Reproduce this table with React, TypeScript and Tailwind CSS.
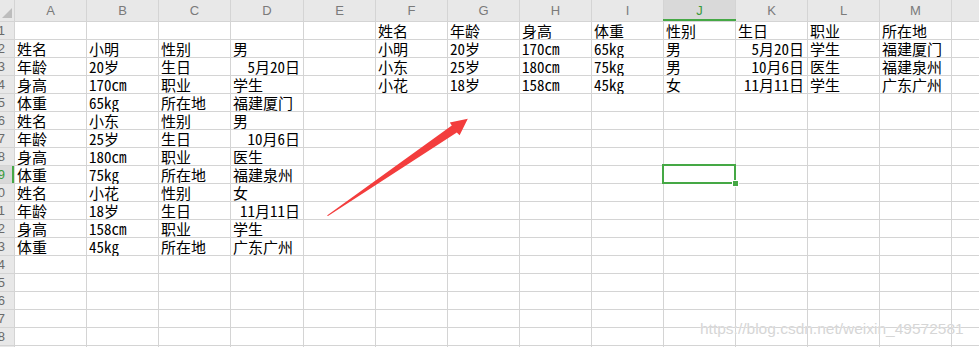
import React from "react";

const COLS = ["A", "B", "C", "D", "E", "F", "G", "H", "I", "J", "K", "L", "M", "N"];

type Cell = { t: string; r?: boolean };

const data: Record<string, Cell> = {};
const put = (col: string, row: number, t: string, r = false) => {
  data[`${col}${row}`] = { t, r };
};

const left: [string, string, string, string, boolean?][] = [
  ["姓名", "小明", "性别", "男"],
  ["年龄", "20岁", "生日", "5月20日", true],
  ["身高", "170cm", "职业", "学生"],
  ["体重", "65kg", "所在地", "福建厦门"],
  ["姓名", "小东", "性别", "男"],
  ["年龄", "25岁", "生日", "10月6日", true],
  ["身高", "180cm", "职业", "医生"],
  ["体重", "75kg", "所在地", "福建泉州"],
  ["姓名", "小花", "性别", "女"],
  ["年龄", "18岁", "生日", "11月11日", true],
  ["身高", "158cm", "职业", "学生"],
  ["体重", "45kg", "所在地", "广东广州"],
];
left.forEach((r, i) => {
  const row = i + 2;
  put("A", row, r[0]);
  put("B", row, r[1]);
  put("C", row, r[2]);
  put("D", row, r[3], !!r[4]);
});

const right: string[][] = [
  ["姓名", "年龄", "身高", "体重", "性别", "生日", "职业", "所在地"],
  ["小明", "20岁", "170cm", "65kg", "男", "5月20日", "学生", "福建厦门"],
  ["小东", "25岁", "180cm", "75kg", "男", "10月6日", "医生", "福建泉州"],
  ["小花", "18岁", "158cm", "45kg", "女", "11月11日", "学生", "广东广州"],
];
const rcols = ["F", "G", "H", "I", "J", "K", "L", "M"];
right.forEach((r, i) => {
  r.forEach((t, j) => put(rcols[j], i + 1, t, i > 0 && rcols[j] === "K"));
});

const ROWS = Array.from({ length: 19 }, (_, i) => i + 1);

const cellFont = {
  fontFamily: '"Noto Sans Mono CJK SC", "Noto Sans CJK SC", monospace',
};

export default function App() {
  return (
    <div className="relative w-[979px] h-[347px] overflow-hidden bg-white">
      <div className="grid grid-cols-[14px_71px_71px_71px_72px_71px_71px_71px_71px_71px_71px_71px_71px_71px_71px] grid-rows-[21px_repeat(19,17px)] gap-px bg-[#d4d4d4] w-max">
        {/* corner */}
        <div className="relative bg-[#e8e8e8]">
          <div className="absolute right-[2px] bottom-[3px] w-0 h-0 border-l-[10px] border-l-transparent border-b-[10px] border-b-[#bdbdbd]" />
        </div>
        {COLS.map((c) =>
          c === "J" ? (
            <div
              key={c}
              className="relative bg-[#d9d9d9] flex items-center justify-center text-[13px] text-[#3a9a3a] font-['Liberation_Sans',sans-serif]"
            >
              {c}
              <div className="absolute left-[-1px] right-[-1px] bottom-0 h-[2px] bg-[#45a845]" />
            </div>
          ) : (
            <div
              key={c}
              className="bg-[#e8e8e8] flex items-center justify-center text-[13px] text-[#7a7a7a] font-['Liberation_Sans',sans-serif]"
            >
              {c}
            </div>
          )
        )}
        {ROWS.map((row) => (
          <React.Fragment key={row}>
            <div
              className={
                "relative overflow-hidden flex items-center justify-end pr-[9px] text-[13px] leading-none font-['Liberation_Sans',sans-serif] " +
                (row === 9 ? "bg-[#d9d9d9] text-[#3a9a3a]" : "bg-[#e8e8e8] text-[#6a6a6a]")
              }
            >
              <span className="whitespace-nowrap">{row}</span>
              {row === 9 && <div className="absolute right-0 top-0 bottom-0 w-[2px] bg-[#45a845]" />}
            </div>
            {COLS.map((c) => {
              const cell = data[`${c}${row}`];
              const selected = c === "J" && row === 9;
              return (
                <div
                  key={c}
                  style={cellFont}
                  className={
                    "relative bg-white flex items-end whitespace-nowrap text-[15px] leading-[17px] text-black " +
                    (cell?.r ? "justify-end pr-[3px]" : "pl-[2px]")
                  }
                >
                  {cell?.t}
                  {selected && (
                    <>
                      <div className="absolute left-[-2px] top-[-2px] right-[-1px] bottom-[-1px] border-2 border-[#45a845] z-10" />
                      <div className="absolute right-[-3px] bottom-[-3px] w-[5px] h-[5px] bg-[#45a845] z-20 outline outline-1 outline-white" />
                    </>
                  )}
                </div>
              );
            })}
          </React.Fragment>
        ))}
      </div>

      {/* red arrow */}
      <svg
        className="absolute left-0 top-0 pointer-events-none"
        width="979"
        height="347"
        viewBox="0 0 979 347"
      >
        <polygon
          points="327,215.5 451.8,125.6 449.8,122.4 467.8,118.8 459.6,135.2 456.8,132.4 328,216"
          fill="#f33d3d"
        />
      </svg>

      {/* watermark */}
      <div className="absolute left-[700px] top-[320px] text-[15.5px] leading-[17px] text-[#d6d6d6] font-['Liberation_Sans',sans-serif] whitespace-nowrap [text-shadow:0_0_1px_#ffffff]">
        https://blog.csdn.net/weixin_49572581
      </div>
    </div>
  );
}
